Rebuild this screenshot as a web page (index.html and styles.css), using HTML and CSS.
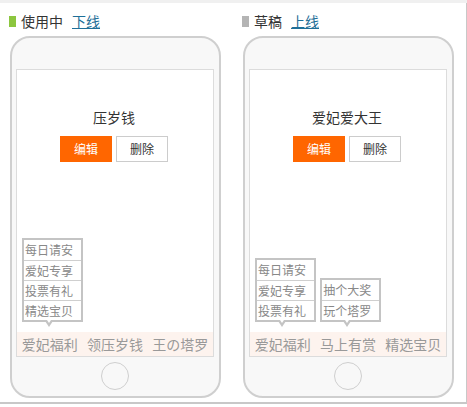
FILE: index.html
```html
<!DOCTYPE html>
<html lang="zh-CN">
<head>
<meta charset="utf-8">
<title>活动管理</title>
<link rel="stylesheet" href="styles.css">
</head>
<body>
<div class="topbar"></div>
<div class="board">
  <div class="col">
    <div class="head"><span class="mark green"></span><span class="status">使用中</span><a class="link" href="#">下线</a></div>
    <div class="phone">
      <div class="screen">
        <div class="title">压岁钱</div>
        <div class="actions"><span class="btn edit">编辑</span><span class="btn del">删除</span></div>
        <div class="tabs">
          <div class="tab">爱妃福利
            <div class="menu">
              <div class="item">每日请安</div>
              <div class="item">爱妃专享</div>
              <div class="item">投票有礼</div>
              <div class="item">精选宝贝</div>
            </div>
            <span class="arrow"></span>
          </div>
          <div class="tab">领压岁钱</div>
          <div class="tab">王の塔罗</div>
        </div>
      </div>
      <div class="home"></div>
    </div>
  </div>
  <div class="col">
    <div class="head"><span class="mark gray"></span><span class="status">草稿</span><a class="link" href="#">上线</a></div>
    <div class="phone">
      <div class="screen">
        <div class="title">爱妃爱大王</div>
        <div class="actions"><span class="btn edit">编辑</span><span class="btn del">删除</span></div>
        <div class="tabs">
          <div class="tab">爱妃福利
            <div class="menu">
              <div class="item">每日请安</div>
              <div class="item">爱妃专享</div>
              <div class="item">投票有礼</div>
            </div>
            <span class="arrow"></span>
          </div>
          <div class="tab">马上有赏
            <div class="menu">
              <div class="item">抽个大奖</div>
              <div class="item">玩个塔罗</div>
            </div>
            <span class="arrow"></span>
          </div>
          <div class="tab">精选宝贝</div>
        </div>
      </div>
      <div class="home"></div>
    </div>
  </div>
</div>
</body>
</html>
```

FILE: styles.css
```css
* { box-sizing: border-box; }
html, body { margin: 0; padding: 0; background: #fff; }
body {
  width: 467px;
  height: 407px;
  overflow: hidden;
  font-family: "Noto Sans CJK SC", "Liberation Sans", sans-serif;
  color: #333;
}
.topbar { height: 3px; background: #f0f0f0; }
.board {
  display: flex;
  width: 467px;
  height: 401px;
  border-right: 1px solid #c8c8c8;
  border-bottom: 2px solid #c8c8c8;
}
.col { width: 234px; padding-left: 10px; }
.head {
  display: flex;
  align-items: center;
  height: 29px;
  padding-top: 8px;
  margin-left: -1px;
  margin-bottom: 4px;
  font-size: 14px;
  line-height: 21px;
}
.mark { flex: none; width: 7px; height: 11px; margin-right: 5px; }
.mark.green { background: #8cc63f; }
.mark.gray { background: #b4b4b4; }
.status { color: #333; }
.link { margin-left: 9px; color: #1f6f98; text-decoration: underline; }
.phone {
  width: 211px;
  height: 362px;
  border: 2px solid #cfcfcf;
  border-radius: 20px;
  background: #f8f8f8;
  padding: 31px 0 0 4px;
  display: flex;
  flex-direction: column;
}
.screen {
  width: 198px;
  height: 288px;
  border: 1px solid #dcdcdc;
  background: #fff;
  display: flex;
  flex-direction: column;
  align-items: center;
}
.title {
  margin-top: 37px;
  margin-left: -2px;
  font-size: 14px;
  line-height: 20px;
  color: #333;
}
.actions { display: flex; gap: 4px; margin-top: 9px; margin-left: -2px; }
.btn {
  width: 52px;
  height: 26px;
  font-size: 12px;
  line-height: 24px;
  text-align: center;
  border: 1px solid #ccc;
}
.btn.edit { background: #ff6600; border-color: #ff6600; color: #fff; }
.btn.del { background: #fff; color: #333; }
.tabs {
  margin-top: auto;
  width: 100%;
  height: 24px;
  display: flex;
  background: #fdf3ee;
}
.tab {
  flex: 1;
  position: relative;
  text-align: center;
  font-size: 14px;
  line-height: 24px;
  color: #999;
}
.menu {
  position: absolute;
  left: 5px;
  bottom: 34px;
  width: 61px;
  border: 2px solid #c4c4c4;
  background: #fff;
  text-align: left;
}
.item {
  height: 20px;
  line-height: 20px;
  padding-left: 1px;
  font-size: 12px;
  color: #888;
  border-top: 1px solid #cfcfcf;
}
.item:first-child { border-top: 0; }
.arrow {
  position: absolute;
  left: 50%;
  bottom: 29px;
  margin-left: -5px;
  width: 0;
  height: 0;
  border-left: 4px solid transparent;
  border-right: 4px solid transparent;
  border-top: 6px solid #c4c4c4;
}
.arrow::after {
  content: "";
  position: absolute;
  left: -2px;
  top: -7px;
  border-left: 2px solid transparent;
  border-right: 2px solid transparent;
  border-top: 3px solid #fff;
}
.home {
  width: 28px;
  height: 28px;
  margin-top: 5px;
  margin-left: 85px;
  border: 1px solid #cfcfcf;
  border-radius: 50%;
}
```
